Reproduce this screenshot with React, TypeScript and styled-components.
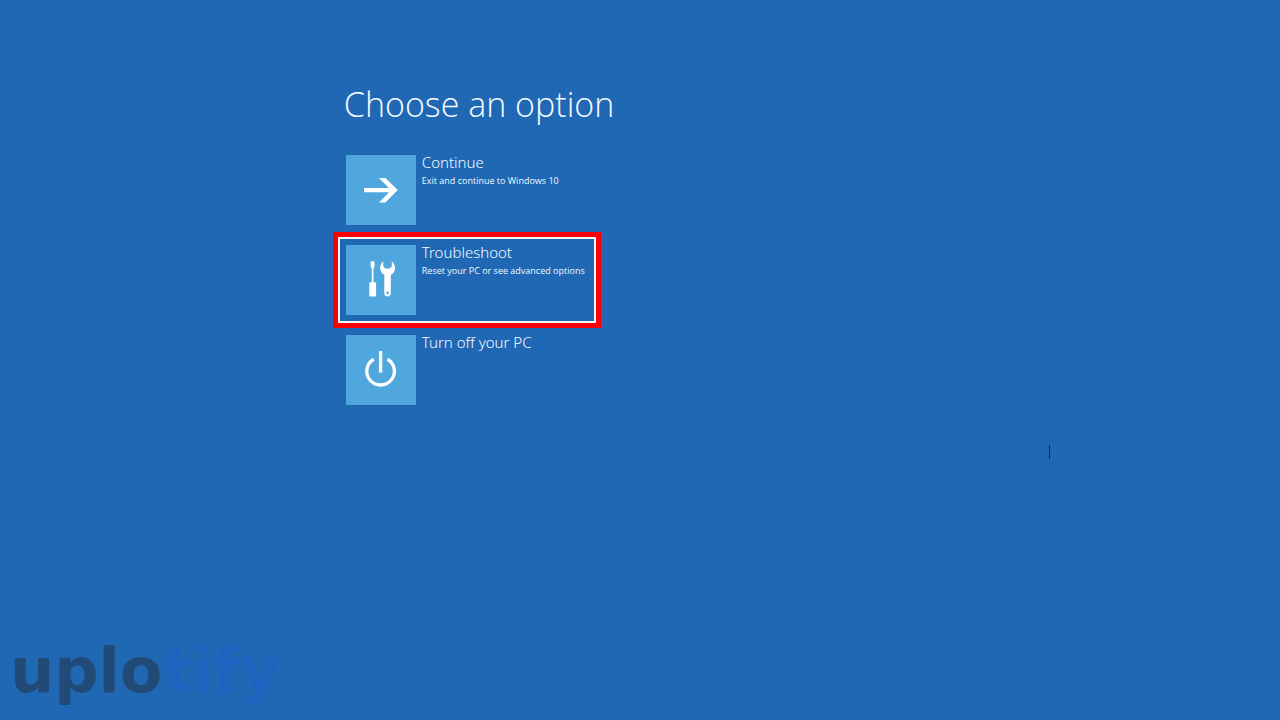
import React from "react";
import styled, { createGlobalStyle } from "styled-components";

const GlobalStyle = createGlobalStyle`
  * {
    box-sizing: border-box;
  }
  body {
    margin: 0;
    background: #2068b4;
    color: #ffffff;
    font-family: "Open Sans", "Noto Sans", sans-serif;
  }
`;

const Screen = styled.div`
  position: relative;
  display: flex;
  flex-direction: column;
  justify-content: space-between;
  min-height: 100vh;
  overflow: hidden;
`;

const Main = styled.main`
  padding: 80px 24px 24px 26%;
`;

const Title = styled.h1`
  margin: 0 0 19px 11px;
  font-size: 34px;
  line-height: 48px;
  font-weight: 300;
  color: #f4faff;
`;

const OptionList = styled.ul`
  display: flex;
  flex-direction: column;
  gap: 4px;
  width: 258px;
  margin: 0 0 0 5px;
  padding: 0;
  list-style: none;
`;

const OptionButton = styled.button<{ $selected?: boolean }>`
  display: flex;
  gap: 6px;
  width: 100%;
  padding: 6px;
  border: 2px solid ${(p) => (p.$selected ? "#f4f9ff" : "transparent")};
  outline: ${(p) => (p.$selected ? "5px solid #fa0008" : "none")};
  background: transparent;
  color: inherit;
  font-family: inherit;
  text-align: left;
  cursor: pointer;
`;

const Tile = styled.span`
  display: flex;
  flex: none;
  width: 70px;
  height: 70px;
  background: #50a7de;
`;

const OptionText = styled.span`
  display: flex;
  flex-direction: column;
  white-space: nowrap;
`;

const OptionName = styled.span`
  font-family: "Noto Sans", "Open Sans", sans-serif;
  font-size: 15px;
  line-height: 14px;
  font-weight: 300;
  color: #f4faff;
`;

const OptionNote = styled.span`
  font-size: 9px;
  line-height: 24px;
  color: #f0f8ff;
`;

const Caret = styled.span`
  position: absolute;
  top: 445px;
  right: 18%;
  width: 1px;
  height: 14px;
  background: #0c2c52;
`;

const Brand = styled.footer`
  padding: 0 10px 3px;
  font-family: "DejaVu Sans", sans-serif;
  font-size: 62px;
  line-height: 92px;
  font-weight: 700;
  color: #214a76;
`;

const BrandAccent = styled.span`
  color: #1f63c0;
`;

const ArrowIcon = () => (
  <svg width="70" height="70" viewBox="0 0 70 70" aria-hidden="true">
    <path
      d="M18 33H43L33 23H39.5L51.7 35L39.5 47.5H33L43 37.3H18Z"
      fill="#fff"
    />
  </svg>
);

const ToolsIcon = () => (
  <svg width="70" height="70" viewBox="0 0 70 70" aria-hidden="true">
    <path
      d="M24.9 16.2H28.3L28.8 20.5L27.5 24V37.2H28.9Q30.1 37.2 30.1 38.4V51.4H23.3V38.4Q23.3 37.2 24.5 37.2H25.8V24L24.5 20.5Z"
      fill="#fff"
    />
    <path
      fillRule="evenodd"
      d="M37.3 16.6Q34.1 18.8 34.1 22.7C34.1 26 35.9 28.6 38.3 29.8V48.3Q38.5 51.6 41.4 51.6Q44.6 51.6 44.8 48.3V29.8C47.5 28.5 49.1 26 49.1 22.7Q49 18.8 45.8 16.6V21.6L43.6 23.6H39.6L37.3 21.6ZM41.6 46.6A1.3 1.3 0 1 0 41.6 49.2A1.3 1.3 0 1 0 41.6 46.6Z"
      fill="#fff"
    />
  </svg>
);

const PowerIcon = () => (
  <svg width="70" height="70" viewBox="0 0 70 70" aria-hidden="true">
    <path
      d="M27.8 24.2A13.8 13.8 0 1 0 41.4 24.2M34.6 16V37.5"
      fill="none"
      stroke="#fff"
      strokeWidth="3.3"
    />
  </svg>
);

const options = [
  { name: "Continue", note: "Exit and continue to Windows 10", Icon: ArrowIcon },
  {
    name: "Troubleshoot",
    note: "Reset your PC or see advanced options",
    Icon: ToolsIcon,
    selected: true,
  },
  { name: "Turn off your PC", Icon: PowerIcon },
];

export default function App() {
  return (
    <Screen>
      <GlobalStyle />
      <Main>
        <Title>Choose an option</Title>
        <OptionList>
          {options.map(({ name, note, Icon, selected }) => (
            <li key={name}>
              <OptionButton type="button" $selected={selected}>
                <Tile>
                  <Icon />
                </Tile>
                <OptionText>
                  <OptionName>{name}</OptionName>
                  {note && <OptionNote>{note}</OptionNote>}
                </OptionText>
              </OptionButton>
            </li>
          ))}
        </OptionList>
      </Main>
      <Caret />
      <Brand>
        uplo<BrandAccent>tify</BrandAccent>
      </Brand>
    </Screen>
  );
}
